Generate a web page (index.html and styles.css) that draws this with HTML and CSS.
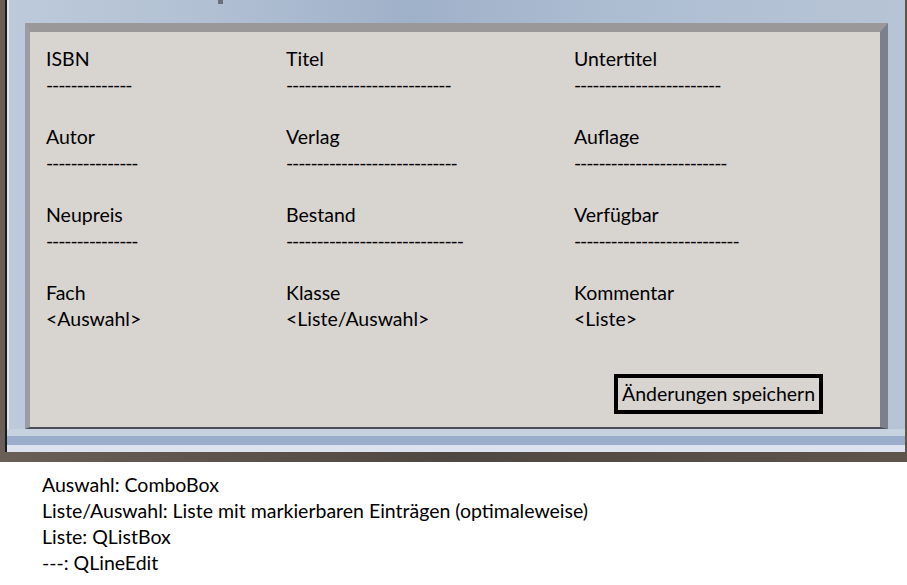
FILE: index.html
```html
<!DOCTYPE html>
<html lang="de">
<head>
<meta charset="utf-8">
<title>Buchdaten</title>
<link rel="stylesheet" href="styles.css">
</head>
<body>
<div class="window">
  <div class="frame">
    <span class="notch"></span>
    <div class="panel">
      <div class="grid">
        <div class="field"><div class="label">ISBN</div><div class="edit">--------------</div></div>
        <div class="field"><div class="label">Titel</div><div class="edit">---------------------------</div></div>
        <div class="field"><div class="label">Untertitel</div><div class="edit">------------------------</div></div>

        <div class="field"><div class="label">Autor</div><div class="edit">---------------</div></div>
        <div class="field"><div class="label">Verlag</div><div class="edit">----------------------------</div></div>
        <div class="field"><div class="label">Auflage</div><div class="edit">-------------------------</div></div>

        <div class="field"><div class="label">Neupreis</div><div class="edit">---------------</div></div>
        <div class="field"><div class="label">Bestand</div><div class="edit">-----------------------------</div></div>
        <div class="field"><div class="label">Verfügbar</div><div class="edit">---------------------------</div></div>

        <div class="field"><div class="label">Fach</div><div class="value">&lt;Auswahl&gt;</div></div>
        <div class="field"><div class="label">Klasse</div><div class="value">&lt;Liste/Auswahl&gt;</div></div>
        <div class="field"><div class="label">Kommentar</div><div class="value">&lt;Liste&gt;</div></div>
      </div>
      <div class="actions">
        <div class="button">Änderungen speichern</div>
      </div>
    </div>
  </div>
</div>
<div class="legend">
  <p>Auswahl: ComboBox</p>
  <p>Liste/Auswahl: Liste mit markierbaren Einträgen (optimaleweise)</p>
  <p>Liste: QListBox</p>
  <p>---: QLineEdit</p>
</div>
</body>
</html>
```
FILE: styles.css
```css
* { box-sizing: border-box; }
html, body { margin: 0; padding: 0; background: #fff; }
body {
  font-family: Lato, "Open Sans", sans-serif;
  font-size: 19.5px;
  line-height: 26px;
  color: #000;
  width: 907px;
  height: 585px;
  overflow: hidden;
}
.window {
  width: 907px;
  height: 462px;
  background: linear-gradient(to right, #6a5f57, #4f4741 50%, #5e544c);
  padding: 0 2px 10px 5px;
}
.frame {
  position: relative;
  height: 100%;
  border-left: 2px solid #1c1a1a;
  background:
    linear-gradient(to right, #dfe6ee 0, #dfe6ee 2px, transparent 2px),
    linear-gradient(to right, #bccadb 0%, #b3c1d4 20%, #9fb1c9 45%, #aebed2 70%, #b7c4d6 100%);
  padding: 23px 17px 23px 18px;
}
.frame::after {
  content: "";
  position: absolute;
  left: 0; right: 0; bottom: 0;
  height: 23px;
  background: linear-gradient(to bottom, #c7d2e0 0, #c7d2e0 7px, #9aaecb 7px, #9aaecb 16px, #dce3ee 16px);
}
.notch {
  position: absolute;
  left: 211px;
  top: 0;
  width: 5px;
  height: 4px;
  background: #6d6f76;
}
.panel {
  height: 100%;
  background: #d8d4d0;
  border-top: 9px solid #9a9899;
  border-left: 5px solid #9b9ca6;
  border-right: 8px solid #7c808c;
  border-bottom: 2px solid #4b4e56;
  padding: 14px 0 0 16px;
  position: relative;
  z-index: 1;
}
.grid {
  display: grid;
  grid-template-columns: 240px 288px 1fr;
  row-gap: 26px;
}
.label, .edit, .value { white-space: nowrap; }
.edit { letter-spacing: -1.15px; }
.actions {
  display: flex;
  justify-content: flex-end;
  padding-right: 57px;
  margin-top: 42px;
}
.button {
  width: 209px;
  height: 40px;
  border: 4px solid #000;
  padding: 3px 0 0 4px;
  line-height: 26px;
  white-space: nowrap;
}
.legend {
  padding: 10px 0 0 42px;
}
.legend p { margin: 0; }
```
